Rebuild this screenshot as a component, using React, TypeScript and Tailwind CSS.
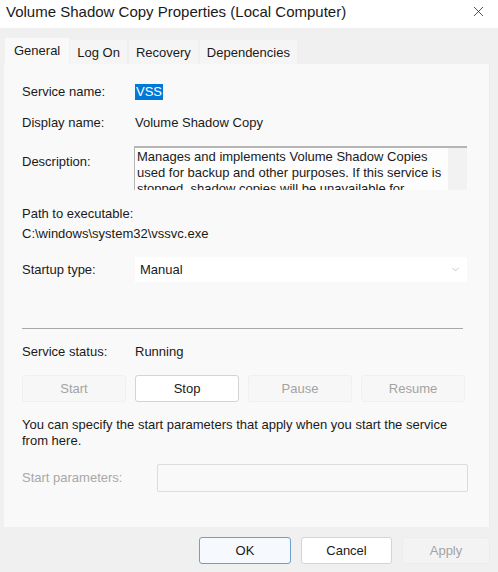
import { X, ChevronDown } from "lucide-react";

const tabs = ["General", "Log On", "Recovery", "Dependencies"];

const descriptionLines = [
  "Manages and implements Volume Shadow Copies",
  "used for backup and other purposes. If this service is",
  "stopped, shadow copies will be unavailable for",
  "backup and the backup may fail.",
];

function ActionButton({ label, enabled }: { label: string; enabled?: boolean }) {
  return (
    <button
      className={
        enabled
          ? "w-[104px] h-[27px] border border-[#d4d4d4] bg-white text-[#1a1a1a] rounded-[3px]"
          : "w-[104px] h-[27px] border border-[#f0f0f0] bg-[#f7f7f7] text-[#a3a3a3] rounded-[3px]"
      }
    >
      {label}
    </button>
  );
}

export default function App() {
  return (
    <div
      className="w-[498px] h-[572px] bg-[#f0f0f0] flex flex-col text-[13px] text-[#1a1a1a] overflow-hidden"
      style={{ fontFamily: '"Liberation Sans", Arial, sans-serif' }}
    >
      {/* title bar */}
      <div className="h-[28px] bg-white flex items-center justify-between pl-[6px] pr-[11px]">
        <span className="text-[15px] leading-[18px] -mt-[5px]">
          Volume Shadow Copy Properties (Local Computer)
        </span>
        <X size={17} strokeWidth={1.1} className="-mt-[6px] text-[#222]" />
      </div>

      {/* tab strip */}
      <div className="flex items-end pl-[5px] mt-[10px] h-[26px]">
        {tabs.map((t, i) => (
          <div
            key={t}
            className={
              i === 0
                ? "h-[26px] px-[9px] bg-[#f9f9f9] flex items-center mr-[1px]"
                : "h-[24px] px-[7px] bg-[#f5f5f5] flex items-center pt-[2px] mr-[2px]"
            }
          >
            {t}
          </div>
        ))}
      </div>

      {/* general page */}
      <div className="mx-[4px] w-[486px] h-[463px] bg-[#f9f9f9] border-r border-[#ececec] pl-[18px] flex flex-col">
        <div className="flex h-[16px] mt-[20px] items-center">
          <span className="w-[113px]">Service name:</span>
          <span className="bg-[#0078d7] text-white px-[1px] leading-[16px]">VSS</span>
        </div>

        <div className="flex h-[16px] mt-[15px] items-center">
          <span className="w-[113px]">Display name:</span>
          <span>Volume Shadow Copy</span>
        </div>

        <div className="flex mt-[15px]">
          <span className="w-[112px] pt-[6px]">Description:</span>
          <div className="w-[333px] h-[44px] border-t-2 border-l border-[#b5b5b5] bg-[#fdfdfd] flex overflow-hidden">
            <div className="flex-1 pl-[2px] pt-[1px] leading-[16px] whitespace-nowrap">
              {descriptionLines.map((l) => (
                <div key={l}>{l}</div>
              ))}
            </div>
            <div className="w-[19px] bg-[#f2f2f2]" />
          </div>
        </div>

        <div className="h-[16px] leading-[16px] mt-[16px]">Path to executable:</div>
        <div className="h-[16px] leading-[16px] mt-[4px]">C:\windows\system32\vssvc.exe</div>

        <div className="flex mt-[15px] items-center">
          <span className="w-[113px]">Startup type:</span>
          <div className="w-[332px] h-[25px] bg-white flex items-center justify-between pl-[5px] pr-[6px]">
            <span>Manual</span>
            <ChevronDown size={11} strokeWidth={1.2} className="text-[#9a9a9a]" />
          </div>
        </div>

        <div className="mt-[46px] w-[441px] h-px bg-[#a8a8a8]" />

        <div className="flex h-[16px] mt-[15px] items-center">
          <span className="w-[113px]">Service status:</span>
          <span>Running</span>
        </div>

        <div className="flex gap-[9px] mt-[15px]">
          <ActionButton label="Start" />
          <ActionButton label="Stop" enabled />
          <ActionButton label="Pause" />
          <ActionButton label="Resume" />
        </div>

        <p className="mt-[15px] w-[450px] leading-[16px]">
          You can specify the start parameters that apply when you start the service from here.
        </p>

        <div className="flex mt-[15px] items-center">
          <span className="w-[135px] text-[#a8a8a8]">Start parameters:</span>
          <div className="w-[311px] h-[28px] border border-[#dcdcdc] bg-[#f9f9f9] rounded-[2px]" />
        </div>
      </div>

      {/* dialog buttons */}
      <div className="flex justify-end gap-[10px] pr-[8px] mt-[10px]">
        <button className="w-[92px] h-[27px] border border-[#6f9fd0] bg-[#f6f9fd] rounded-[3px]">
          OK
        </button>
        <button className="w-[91px] h-[27px] border border-[#d4d4d4] bg-white rounded-[3px]">
          Cancel
        </button>
        <button className="w-[88px] h-[27px] border border-[#ececec] bg-[#f3f3f3] text-[#a3a3a3] rounded-[3px]">
          Apply
        </button>
      </div>
    </div>
  );
}
